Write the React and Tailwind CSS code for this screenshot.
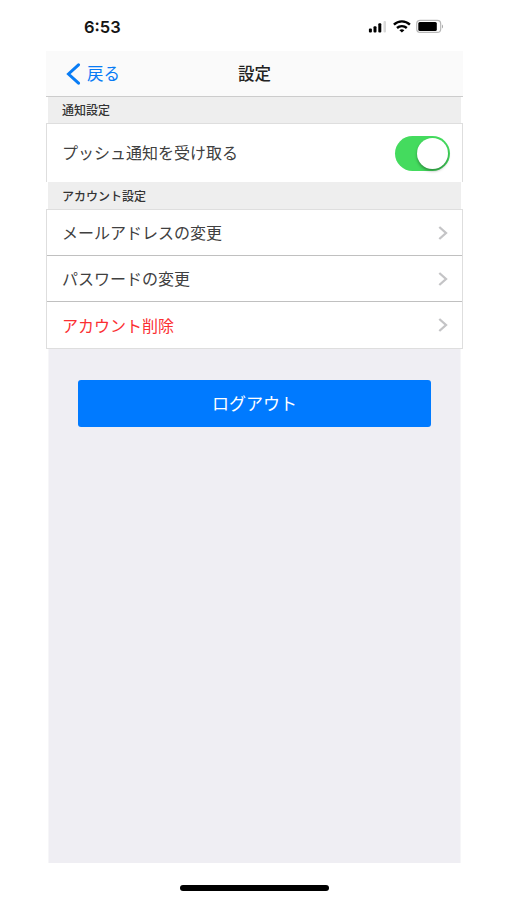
import React, { useState } from 'react';

const accountItems = [
  { label: 'メールアドレスの変更' },
  { label: 'パスワードの変更' },
  { label: 'アカウント削除', danger: true },
];

const StatusBar = () => (
  <div className="h-[51px] flex items-start justify-between pl-[38px] pr-[19px]">
    <span className="mt-[17px] font-['Inter','Liberation_Sans',sans-serif] text-[16.5px] leading-[20px] font-semibold text-[#151515]">6:53</span>
    <div className="mt-[19px] flex items-center">
      {/* 電波 */}
      <svg width="19" height="15" viewBox="0 0 19 15">
        <rect x="0.9" y="9.4" width="3" height="4" rx="1" fill="#000" />
        <rect x="5.5" y="7.3" width="3" height="6.1" rx="1" fill="#000" />
        <rect x="10.3" y="4.2" width="3" height="9.2" rx="1" fill="#000" />
        <rect x="15.5" y="2" width="2.5" height="11.4" rx="1" fill="#d8d8d8" />
      </svg>
      {/* Wi-Fi */}
      <svg className="ml-[5px]" width="20" height="15" viewBox="0 0 20 15" fill="none" stroke="#000" strokeWidth="2.4">
        <path d="M1.9 5.6a11.6 11.6 0 0 1 16 0" />
        <path d="M5 9a7.2 7.2 0 0 1 9.8 0" />
        <path d="M9.900 13.600L7.400 11.300a3.700 3.700 0 0 1 5 0z" fill="#000" stroke="none" />
      </svg>
      {/* バッテリー */}
      <svg className="ml-[4px]" width="28" height="15" viewBox="0 0 28 15">
        <rect x="0.7" y="1.4" width="24" height="12" rx="3.5" fill="#fff" stroke="#b8b8b8" strokeWidth="1.2" />
        <rect x="2.3" y="3" width="18.5" height="9" rx="1.5" fill="#000" />
        <path d="M26 5.5v4c1.300-.5 1.300-3.500 0-4z" fill="#a5a5a5" />
      </svg>
    </div>
  </div>
);

const SectionTitle = ({ children }) => (
  <h2 className="mx-[2px] h-[26px] pl-[14px] bg-[#eeeeee] text-[12px] leading-[26px] font-medium text-[#333333]">{children}</h2>
);

const Switch = ({ checked, onChange }) => (
  <button
    role="switch"
    aria-checked={checked}
    onClick={() => onChange(!checked)}
    className={`w-[55px] h-[35px] p-[2px] rounded-full flex items-center ${checked ? 'bg-[#44db5e] justify-end' : 'bg-[#e5e5e5] justify-start'}`}
  >
    <span className="w-[31px] h-[31px] rounded-full bg-white shadow-[0_2px_3px_rgba(0,0,0,0.35)]" />
  </button>
);

const App = () => {
  const [push, setPush] = useState(true);

  return (
    <div className="w-[507px] h-[900px] overflow-hidden bg-white font-['Noto_Sans_CJK_JP',sans-serif]">
      <div className="ml-[46px] w-[417px] h-full flex flex-col">
        <StatusBar />

        {/* ナビゲーション */}
        <header className="h-[46px] px-[20px] grid grid-cols-3 items-center bg-[#fafafa] border-b border-[#cccccc] text-[16.5px] leading-none">
          <button className="flex items-center gap-[6px] text-[#087cf5]">
            <svg width="15" height="22" viewBox="0 0 15 22" fill="none" stroke="currentColor" strokeWidth="3" strokeLinecap="round">
              <path d="M12.5 1.8L2.5 11l10 9.2" />
            </svg>
            <span className="pb-px">戻る</span>
          </button>
          <h1 className="text-center font-medium text-[#222222]">設定</h1>
        </header>

        <SectionTitle>通知設定</SectionTitle>
        <div className="h-[59px] pl-[15px] pr-[12px] flex items-center justify-between bg-white border border-b-0 border-[#dedede] text-[16px] text-[#404040]">
          <span className="pb-[2px]">プッシュ通知を受け取る</span>
          <Switch checked={push} onChange={setPush} />
        </div>

        <div className="pt-px mx-[2px] bg-[#eeeeee]">
          <h2 className="h-[26px] pl-[14px] text-[12px] leading-[26px] font-medium text-[#333333]">アカウント設定</h2>
        </div>
        <ul className="bg-white border border-[#dedede] divide-y divide-[#c0c0c0]">
          {accountItems.map((item) => (
            <li
              key={item.label}
              className={`h-[46px] pl-[15px] pr-[14px] flex items-center justify-between text-[16px] ${item.danger ? 'text-[#fb2f32]' : 'text-[#404040]'}`}
            >
              <span className="pb-px">{item.label}</span>
              <svg width="10" height="14" viewBox="0 0 10 14" fill="none" stroke="#c4c4c6" strokeWidth="2.3">
                <path d="M1.300 1L8 7l-6.700 6" />
              </svg>
            </li>
          ))}
        </ul>

        <main className="mx-[2px] h-[514px] px-[29px] pt-[31px] bg-[#efeef3] border-x border-[#f6f6f8]">
          <button className="w-full h-[47px] pb-[2px] rounded-[3px] bg-[#007aff] text-[17px] text-white">ログアウト</button>
        </main>

        <div className="mt-[22px] mx-auto w-[149px] h-[5.5px] shrink-0 rounded-full bg-black" />
      </div>
    </div>
  );
};

export default App;
